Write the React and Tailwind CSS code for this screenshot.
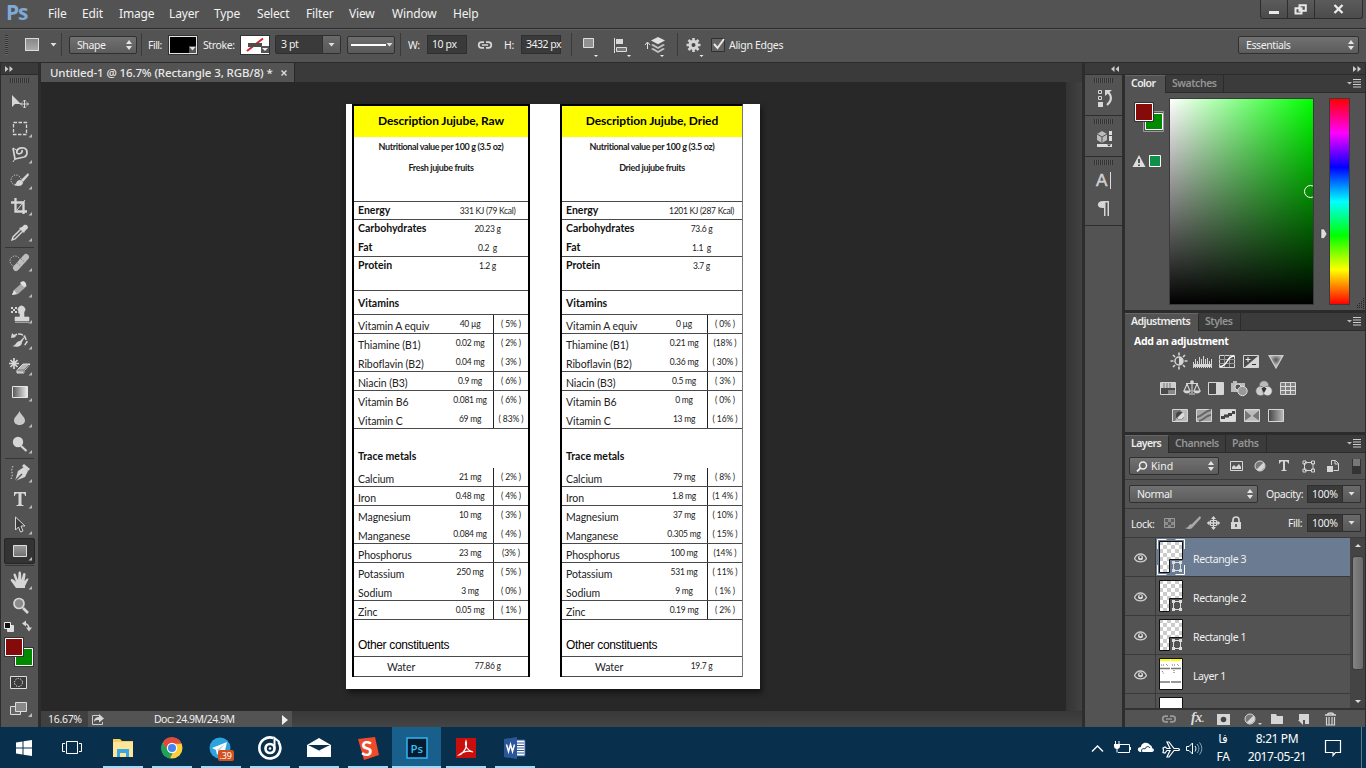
import React from "react";

const UI = "font-['Noto_Sans',sans-serif] text-[10.5px] leading-[14px] tracking-[-0.4px] whitespace-nowrap text-[#f0f0f0]";

function Svg({ w, h, className = "", children }) {
  return (
    <svg width={w} height={h} viewBox={`0 0 ${w} ${h}`} className={`block shrink-0 ${className}`} fill="none">
      {children}
    </svg>
  );
}

const L = "#d6d6d6";

/* ---------- top bars ---------- */

const menus = [
  ["File", "w-[34px]"],
  ["Edit", "w-[37px]"],
  ["Image", "w-[50px]"],
  ["Layer", "w-[45px]"],
  ["Type", "w-[43px]"],
  ["Select", "w-[49px]"],
  ["Filter", "w-[43px]"],
  ["View", "w-[43px]"],
  ["Window", "w-[61px]"],
  ["Help", "w-[40px]"],
];

function MenuBar() {
  return (
    <div className="flex h-7 items-start bg-[#535353]">
      <div className="w-[48px] pl-[6px] pt-[1px] font-['Open_Sans',sans-serif] text-[21px] font-bold leading-[23px] tracking-[-1.2px] text-[#7fa9d8]">Ps</div>
      {menus.map(([m, w]) => (
        <div key={m} className={`${w} pt-[6px] font-['Noto_Sans',sans-serif] text-[12px] leading-4 tracking-[-0.15px] whitespace-nowrap text-[#f2f2f2]`}>
          {m}
        </div>
      ))}
      <div className="ml-auto mr-[3px] flex h-[19px] rounded-b-[3px] border border-t-0 border-[#2d2d2d] bg-linear-to-b from-[#5b5b5b] to-[#4b4b4b]">
        <div className="flex w-[27px] justify-center border-r border-[#2d2d2d] pt-[11px]"><div className="h-[3px] w-[10px] bg-[#e8e8e8]" /></div>
        <div className="flex w-[27px] justify-center border-r border-[#2d2d2d] pt-1">
          <Svg w={14} h={11}><path d="M5.500 1.200h6.300v5.600H5.500zM1.500 4.200h6v5.300h-6z" stroke="#e8e8e8" strokeWidth="2" /></Svg>
        </div>
        <div className="flex w-[47px] justify-center pt-1"><Svg w={11} h={10}><path d="M1.500 1l8 8M9.500 1l-8 8" stroke="#ededed" strokeWidth="2.300" /></Svg></div>
      </div>
    </div>
  );
}

function Updown() {
  return <Svg w={6} h={10}><path d="M0 4l3-4 3 4zM0 6l3 4 3-4z" fill="#e5e5e5" /></Svg>;
}
function Down({ className = "" }) {
  return <Svg w={7} h={4} className={className}><path d="M.5 0h6L3.500 3.600z" fill="#e0e0e0" /></Svg>;
}
function Sep({ className = "" }) {
  return <div className={`h-[23px] w-px shrink-0 bg-[#3a3a3a] ${className}`} />;
}
function Select({ className = "", children }) {
  return (
    <div className={`flex h-[18px] shrink-0 items-center justify-between rounded-[2px] border border-[#303030] bg-linear-to-b from-[#717171] to-[#5c5c5c] pl-[7px] pr-[4px] ${UI} ${className}`}>
      {children}
      <Updown />
    </div>
  );
}
function LinkIcon({ c = L }) {
  return (
    <Svg w={16} h={10}>
      <path d="M7 2.200H4.500a2.800 2.800 0 0 0 0 5.600H7M9 2.200h2.500a2.800 2.800 0 0 1 0 5.600H9M5 5h6" stroke={c} strokeWidth="1.700" />
    </Svg>
  );
}

function OptionsBar() {
  return (
    <div className={`flex h-[35px] items-center border-y border-t-[#2b2b2b] border-b-[#2b2b2b] bg-[#535353] pb-[2px] shadow-[inset_0_1px_0_#626262] ${UI}`}>
      <div className="ml-[5px] h-5 w-[3px] bg-[repeating-linear-gradient(#333_0_1px,#666_1px_2px)]" />
      <div className="ml-[17px] h-[13px] w-[14px] border border-[#dcdcdc] bg-linear-to-b from-[#888] to-[#aaa]" />
      <Down className="ml-[11px]" />
      <Sep className="ml-[4px]" />
      <Select className="ml-[7px] w-[68px]">Shape</Select>
      <Sep className="ml-[4px]" />
      <div className="ml-[6px] w-[21px] tracking-[-0.5px]">Fill:</div>
      <div className="flex h-[18px] w-7 items-end justify-end border border-[#e4e4e4] bg-black outline outline-[#333]"><div className="flex h-[7px] w-[7px] items-center bg-[#555]"><Down /></div></div>
      <div className="ml-[6px] w-[38px] tracking-[-0.4px]">Stroke:</div>
      <div className="w-7 outline outline-[#333]">
        <Svg w={28} h={18}>
          <path d="M0 0h28v18H0z" fill="#fff" /><path d="M6 15L22 2.500" stroke="#d8232a" strokeWidth="2" /><path d="M7 7h14v4H7z" fill="#4a4f4b" /><path d="M20 10h8v7h-8z" fill="#555" /><path d="M21 12h6l-3 3z" fill="#eee" />
        </Svg>
      </div>
      <div className="ml-[6px] flex h-[19px] w-[66px] rounded-[2px] border border-[#2f2f2f] bg-[#3a3a3a]">
        <div className="w-[46px] pl-[5px] pt-px">3 pt</div>
        <div className="flex flex-1 items-center justify-center border-l border-[#2f2f2f] bg-linear-to-b from-[#6a6a6a] to-[#585858]"><Down /></div>
      </div>
      <div className="ml-[6px] flex h-[18px] w-[48px] items-center rounded-[2px] border border-[#303030] bg-linear-to-b from-[#6d6d6d] to-[#5a5a5a] pl-[3px]"><div className="h-[2px] w-[35px] bg-white" /><Down /></div>
      <Sep className="ml-[5px]" />
      <div className="ml-[7px] w-[19px]">W:</div>
      <div className="h-[19px] w-10 border border-[#2f2f2f] bg-[#3a3a3a] pl-[4px] pt-px">10 px</div>
      <div className="ml-[10px]"><LinkIcon /></div>
      <div className="ml-[11px] w-[17px]">H:</div>
      <div className="h-[19px] w-10 border border-[#2f2f2f] bg-[#3a3a3a] pl-[4px] pt-px tracking-[-0.5px]">3432 px</div>
      <Sep className="ml-[10px]" />
      <Svg w={98} h={26} className="ml-[7px]">
        <path d="M4.500 6.500h10v9H4.500z" fill="#919191" stroke="#dedede" />
        <path d="M15 23h4l-2 2zM48 23h4l-2 2zM81 23h4l-2 2z" fill="#eee" />
        <path d="M35.500 6v15" stroke="#ddd" /><path d="M37 7h7v5h-7z" fill="#d8d8d8" /><path d="M37.500 15.500h10v4h-10z" stroke="#ddd" fill="#777" />
        <path d="M68.500 17v-6M66 13l2.500-3 2.500 3" stroke="#e2e2e2" />
        <path d="M72 17l7 4 7-4-2-1-5 3-5-3zM72 13l7 4 7-4-2-1-5 3-5-3z" fill="#c4c4c4" /><path d="M72 8.500L79 5l7 3.500-7 3.700z" fill="#e0e0e0" />
      </Svg>
      <Sep />
      <Svg w={20} h={26} className="ml-[8px]">
        <g stroke="#d4d4d4" strokeWidth="2.600"><path d="M7.500 6v14M.5 13h14M2.500 8l10 10M12.500 8l-10 10" /></g>
        <circle cx="7.500" cy="13" r="5" fill="#d4d4d4" /><circle cx="7.500" cy="13" r="2" fill="#474747" /><path d="M13.500 23h4l-2 2z" fill="#eee" />
      </Svg>
      <Svg w={17} h={18} className="ml-[4px]">
        <path d="M1.500 2.500h13v13h-13z" fill="#636363" stroke="#303030" /><path d="M4 8l3.500 4L14 3" stroke="#e8e8e8" strokeWidth="2" />
      </Svg>
      <div className="ml-[2px] tracking-[-0.3px]">Align Edges</div>
      <Select className="ml-auto mr-[7px] w-[121px]">Essentials</Select>
    </div>
  );
}

/* ---------- tool column ---------- */

const tools = {
  move: <><path d="M11 6v12l3-3h6z" fill={L} /><path d="M23.500 11v8M19.500 15h8M22 12.500l1.500-1.500 1.500 1.500M22 17.500l1.500 1.500 1.500-1.500M21 13.500L19.500 15l1.500 1.500M26 13.500l1.500 1.500-1.500 1.500" stroke={L} /></>,
  marquee: <path d="M12.500 7.500h13v12h-13z" stroke={L} strokeWidth="1.300" strokeDasharray="3.500 1.500" />,
  lasso: <><path d="M12 7l2 11 9-2c4-1 4-8 0-9-5-1-8 2-7 5 2 2 6 0 5-3" stroke={L} strokeWidth="1.700" /><path d="M12 7l5 3M14 18l-2 3" stroke={L} /></>,
  quick: <><circle cx="15" cy="13" r="5" stroke={L} strokeDasharray="1.200 1.400" /><path d="M27 6l-7 7 2 2 6-7z" fill={L} /><path d="M19 13c-4 0-3 4-6 5 5 2 9 1 9-3z" fill={L} /></>,
  crop: <><path d="M14.500 5v13.500H26M10 9.500h12.500V21" stroke={L} strokeWidth="2.300" /><path d="M16 17l8-10" stroke={L} /></>,
  dropper: <><path d="M20 10l-8 8-1 3 3-1 8-8" stroke={L} strokeWidth="1.400" /><path d="M18 9l5 5 1-2 3-3c0-3-2-4-4-3l-2 2z" fill={L} /></>,
  heal: <><circle cx="14" cy="12" r="5" stroke={L} strokeDasharray="1.200 1.400" /><path d="M15 19l10-11" stroke="#bdbdbd" strokeWidth="6" strokeLinecap="round" /><path d="M16 14l5 4M20 10l5 4" stroke="#777" strokeDasharray="1 1.500" /></>,
  pencil: <><path d="M11 20l2-5 9-8 4 4-9 8z" fill="#a8a8a8" /><path d="M20 7c2-2 6 0 5 4l-2 1-4-4zM11 20l2-5 3 4z" fill="#e0e0e0" /></>,
  stamp: <><path d="M17 12l1-1a3.500 3.500 0 1 1 5 0v5h5v4H14v-4h5v-3M14 21.500h14" fill={L} stroke={L} strokeWidth=".6" /><path d="M10 6h2v2h-2zM14 6h2v2h-2zM12 8h2v2h-2zM10 10h2v2h-2zM14 10h2v2h-2z" fill={L} /></>,
  history: <><path d="M12 10c3-4 9-4 12 0l2 5-3 4" stroke={L} strokeDasharray="5 1" strokeWidth="1.500" /><path d="M10 11l1-5 4 4z" fill={L} /><path d="M25 8l-6 6c-4 0-4 5-8 5 6 2 10 0 10-4z" fill={L} /></>,
  eraser: <><path d="M13 5v11M8 10.500h10M9.500 7l7 7M16.500 7l-7 7" stroke={L} strokeWidth="1.700" /><path d="M16 17l6-6h7l-6 7v2h-7z" fill="#b7b7b7" stroke="#ddd" /><path d="M16 17h7v3M23 17l5-5" stroke="#777" /></>,
  gradient: <><defs><linearGradient id="tg"><stop stopColor="#555" /><stop offset="1" stopColor="#eee" /></linearGradient></defs><path d="M11.500 7.500h15v11h-15z" fill="url(#tg)" stroke="#e5e5e5" /></>,
  blur: <path d="M18.500 6c1.500 4 5.500 6 5.500 9.500 0 6-11 6-11 0 0-3.500 4-5.500 5.500-9.500z" fill="#c9c9c9" />,
  dodge: <><circle cx="17" cy="11" r="5.200" fill={L} /><path d="M20 15l5.500 5" stroke={L} strokeWidth="2.300" /></>,
  pen: <><path d="M14 21l3-10 6-4 4 4-3 6z" fill={L} /><path d="M23 4l6 5-2 2-6-5z" fill={L} /><path d="M14 21l7-7" stroke="#555" strokeWidth="1.400" /><path d="M12 6c-3 5 1 8-2 13" stroke={L} strokeDasharray="1.500 1.500" /></>,
  type: <path d="M13 6h12v4h-1c0-2-1-2.500-3.500-2.500V18c0 1 1 1 2 1v1h-7v-1c1 0 2 0 2-1V7.500C15 7.500 14 8 14 10h-1z" fill={L} />,
  arrow: <path d="M14.500 5v13l3-3 2 5 2.500-1-2-5h4z" fill="#3c3c3c" stroke={L} />,
  rect: <><defs><linearGradient id="tr" x2="0" y2="1"><stop stopColor="#9a9a9a" /><stop offset="1" stopColor="#707070" /></linearGradient></defs><path d="M12.500 7.500h13v11h-13z" fill="url(#tr)" stroke="#ddd" /></>,
  hand: <path d="M15 21l-5-7c-1-2 1-3 3-1l2 2-2.500-7c0-2 2-2 2.500 0l2 5 .5-7c0-2 2.500-2 2.500 0l.5 7 1.500-6c1-2 3-1 2.500 1l-1 6 2-2c2-1 2.500 0 1.500 1l-3 6v2h-7z" fill={L} />,
  zoom: <><circle cx="18" cy="10.500" r="5" fill="#8b8b8b" stroke={L} strokeWidth="1.700" /><path d="M22 15l5 5" stroke={L} strokeWidth="2.600" /></>,
};

function Tool({ id, corner = true, active }) {
  return (
    <div className={active ? "ml-[3px] w-[31px] rounded-[3px] bg-[#333] shadow-[inset_0_0_0_1px_#262626]" : "ml-[3px] w-[31px]"}>
      <svg width="31" height="26" viewBox="3 0 31 26" fill="none" className="block">
        {tools[id]}
        {corner && <path d="M31 19v3.500h-3.500z" fill="#bbb" />}
      </svg>
    </div>
  );
}
function ToolSep({ h = "h-[3px]" }) {
  return <div className={`mx-1 ${h} flex items-center`}><div className="h-px w-full bg-[#363636]" /></div>;
}
function Grip({ className = "" }) {
  return <div className={`h-[5px] w-[19px] bg-[repeating-linear-gradient(90deg,#333_0_1px,#5e5e5e_1px_2px)] ${className}`} />;
}
function Chev({ left }) {
  return <Svg w={8} h={6} className={left ? "rotate-180" : ""}><path d="M0 0l3.500 3L0 6zM4.500 0L8 3 4.500 6z" fill="#ccc" /></Svg>;
}

function Toolbar() {
  return (
    <div className="flex w-[41px] shrink-0 flex-col border-l border-r-[3px] border-l-[#2d2d2d] border-r-[#2d2d2d] bg-[#535353]">
      <div className="flex h-[12px] items-center border-b border-[#2b2b2b] bg-[#3a3a3a] pl-1"><Chev /></div>
      <div className="h-[14px] pl-[9px] pt-[3px]"><Grip /></div>
      <Tool id="move" corner={false} /><Tool id="marquee" /><Tool id="lasso" /><Tool id="quick" /><Tool id="crop" /><Tool id="dropper" />
      <ToolSep h="h-[4px]" />
      <Tool id="heal" /><Tool id="pencil" /><Tool id="stamp" /><Tool id="history" /><Tool id="eraser" /><Tool id="gradient" /><Tool id="blur" /><Tool id="dodge" />
      <ToolSep />
      <Tool id="pen" /><Tool id="type" /><Tool id="arrow" /><Tool id="rect" active />
      <ToolSep />
      <Tool id="hand" /><Tool id="zoom" corner={false} />
      <Svg w={37} h={108}>
        <path d="M6.500 6.500h6v6h-6z" fill="#ddd" stroke="#ddd" /><path d="M3.500 3.500h6v6h-6z" fill="#111" stroke="#eee" />
        <path d="M23 4.500c4 0 5 2 5 6" stroke={L} strokeWidth="1.500" /><path d="M21 4.500l4-3v6zM25 8.500h6l-3 4z" fill={L} />
        <path d="M14.500 29.500h17v17h-17z" fill="#008a00" stroke="#fff" /><path d="M13.500 28.500h19v19h-19z" stroke="#333" />
        <path d="M3.500 18.500h19v19h-19z" stroke="#333" /><path d="M4.500 19.500h17v17h-17z" fill="#850a0a" stroke="#fff" />
        <path d="M9.500 57.500h16v12h-16z" fill="#3c3c3c" stroke="#ddd" /><circle cx="17.500" cy="63.500" r="4" stroke="#eee" strokeDasharray="1.300 1.200" />
        <path d="M9.500 87.500h10v8h-10z" fill="#666" stroke="#ddd" /><path d="M14.500 83.500h11v9h-11z" fill="#888" stroke="#ddd" /><path d="M31 94v4h-4z" fill="#bbb" />
      </Svg>
    </div>
  );
}

/* ---------- document ---------- */

const BOLD = "text-[10.5px] font-bold tracking-[0px] text-[#111]";
const NORM = "text-[10.5px] tracking-[-0.08px] text-[#222]";

// height, line below, label, left value, left percent, right value, right percent
const rows = [
  ["h-[18px]", 1, "Energy", "331 KJ (79 Kcal)", "", "1201 KJ (287 Kcal)", ""],
  ["h-[19px]", 0, "Carbohydrates", "20.23 g", "", "73.6 g", ""],
  ["h-[18px]", 1, "Fat", "0.2  g", "", "1.1  g", ""],
  ["h-[34px]", 1, "Protein", "1.2 g", "", "3.7 g", ""],
  ["h-[24px]", 1, "Vitamins"],
  ["h-[19px]", 1, "Vitamin A equiv", "40 µg", "( 5% )", "0 µg", "( 0% )"],
  ["h-[19px]", 0, "Thiamine (B1)", "0.02 mg", "( 2% )", "0.21 mg", "(18% )"],
  ["h-[19px]", 1, "Riboflavin (B2)", "0.04 mg", "( 3% )", "0.36 mg", "( 30% )"],
  ["h-[19px]", 1, "Niacin (B3)", "0.9 mg", "( 6% )", "0.5 mg", "( 3% )"],
  ["h-[19px]", 0, "Vitamin B6", "0.081 mg", "( 6% )", "0 mg", "( 0% )"],
  ["h-[19px]", 1, "Vitamin C", "69 mg", "( 83% )", "13 mg", "( 16% )"],
  ["h-[39px]", 0, "Trace metals"],
  ["h-[19px]", 1, "Calcium", "21 mg", "( 2% )", "79 mg", "( 8% )"],
  ["h-[19px]", 1, "Iron", "0.48 mg", "( 4% )", "1.8 mg", "(1 4% )"],
  ["h-[19px]", 0, "Magnesium", "10 mg", "( 3% )", "37 mg", "( 10% )"],
  ["h-[19px]", 1, "Manganese", "0.084 mg", "( 4% )", "0.305 mg", "( 15% )"],
  ["h-[19px]", 1, "Phosphorus", "23 mg", "(3% )", "100 mg", "(14% )"],
  ["h-[19px]", 0, "Potassium", "250 mg", "( 5% )", "531 mg", "( 11% )"],
  ["h-[19px]", 1, "Sodium", "3 mg", "( 0% )", "9 mg", "( 1% )"],
  ["h-[19px]", 1, "Zinc", "0.05 mg", "( 1% )", "0.19 mg", "( 2% )"],
  ["h-[37px]", 1, "Other constituents"],
  ["h-[20px]", 1, "Water", "77.86 g", "", "19.7 g", ""],
];
const VAL = "whitespace-pre text-center text-[8.5px] leading-3 text-[#222]";

function Row({ row, right }) {
  const [h, line, label, lv, lp, rv, rp] = row;
  const v = right ? rv : lv;
  const p = right ? rp : lp;
  const border = line ? "border-b border-[#4a4a4a]" : "";
  if (v === undefined) {
    const pad =
      label === "Vitamins"
        ? `pt-[5px] ${BOLD}`
        : label === "Trace metals"
          ? `pt-[20px] ${BOLD}`
          : "pt-[18px] text-[12px] tracking-[-0.35px] font-['Liberation_Sans',sans-serif]";
    return <div className={`${h} ${border} pl-[4px] leading-[14px] ${pad}`}>{label}</div>;
  }
  if (!p) {
    const kind = label === "Water" ? `pl-[33px] pt-[3px] ${NORM}` : `pl-[4px] pt-[1px] ${BOLD}`;
    return (
      <div className={`flex ${h} ${border}`}>
        <div className={`leading-[14px] ${kind} ${right ? "w-[99px]" : "w-[93px]"}`}>{label}</div>
        <div className={`flex-1 pt-[3px] tracking-[-0.3px] ${VAL}`}>{v}</div>
      </div>
    );
  }
  return (
    <div className={`flex ${h} ${border}`}>
      <div className={`pl-[4px] pt-[4px] leading-[14px] ${NORM} ${right ? "w-[99px]" : "w-[93px]"}`}>{label}</div>
      <div className={`w-[46px] pt-[3px] tracking-[-0.25px] ${VAL}`}>{v}</div>
      <div className={`flex-1 border-l border-[#222] pt-[3px] tracking-[-0.1px] ${VAL}`}>{p}</div>
    </div>
  );
}

function Sheet({ right }) {
  return (
    <div className={`flex h-[573px] flex-col border-t-2 border-black ${right ? "ml-[30px] w-[183px] border-l-2 border-r border-r-[#777]" : "ml-[6px] w-[178px] border-x-2"}`}>
      <div className="h-[31px] bg-[#ffff00] pt-[7px] text-center text-[12px] font-bold leading-4 tracking-[-0.1px]">{right ? "Description Jujube, Dried" : "Description Jujube, Raw"}</div>
      <div className="h-[65px] border-b border-[#4a4a4a] text-center text-[9px] font-bold leading-[21px] tracking-[-0.37px] text-[#1c1c1c]">
        <div className="-mt-[1px]">Nutritional value per 100 g (3.5 oz)</div>
        <div>{right ? "Dried jujube fruits" : "Fresh jujube fruits"}</div>
      </div>
      {rows.map((r) => <Row key={r[2]} row={r} right={right} />)}
    </div>
  );
}

function Document() {
  return (
    <div className="flex w-[1041px] shrink-0 flex-col">
      <div className="flex h-[19px] bg-[#3a3a3a]">
        <div className="flex w-[254px] items-center border-r border-[#282828] bg-[#535353] pl-[9px] font-['Noto_Sans',sans-serif] text-[11.5px] font-medium tracking-[-0.12px] whitespace-nowrap text-[#e8e8e8]">
          Untitled-1 @ 16.7% (Rectangle 3, RGB/8) *
          <Svg w={6} h={6} className="ml-auto mr-[7px]"><path d="M.5.5l5 5M5.500.5l-5 5" stroke="#ddd" strokeWidth="1.400" /></Svg>
        </div>
      </div>
      <div className="flex h-[629px] bg-[#282828]">
        <div className="h-full flex-1 pl-[305px] pt-[22px]">
          <div className="flex h-[585px] w-[414px] bg-white font-['Lato',sans-serif] text-black shadow-[2px_4px_5px_#151515]">
            <Sheet />
            <Sheet right />
          </div>
        </div>
        <div className="w-[16px] bg-linear-to-r from-[#343434] to-[#424242]" />
      </div>
      <div className={`flex h-4 bg-linear-to-b from-[#383838] to-[#444] ${UI}`}>
        <div className="w-[47px] bg-[#404040] pl-[7px] pt-px tracking-[-0.3px]">16.67%</div>
        <div className="flex w-[204px] bg-[#535353]">
          <Svg w={16} h={16} className="ml-[2px]"><path d="M9 4.500H2.500v9h10V11" stroke="#ccc" /><path d="M4 11c0-4 3-5 5-5V3l5 4.500-5 4V9c-2 0-4 0-5 2z" fill={L} /></Svg>
          <div className="ml-[48px] pt-px tracking-[-0.55px]">Doc: 24.9M/24.9M</div>
          <Svg w={7} h={10} className="ml-auto mr-[3px] mt-1"><path d="M0 0l6 5-6 5z" fill="#eee" /></Svg>
        </div>
      </div>
    </div>
  );
}

/* ---------- right dock ---------- */

function IconStrip() {
  return (
    <div className="flex w-[37px] flex-col">
      <div className="h-[41px] border-b border-[#2d2d2d] pl-[9px] pt-[3px]">
        <Grip />
        <Svg w={19} h={22} className="mt-[5px]"><path d="M4.500 2.500h3v3h-3zM4.500 8.500h3v3h-3z" stroke={L} /><path d="M4 14h5v5H4z" fill={L} /><path d="M14 4c4 4 4 9-1 13" stroke={L} strokeWidth="2.200" /><path d="M11 8V2h7z" fill={L} /></Svg>
      </div>
      <div className="h-[41px] border-b border-[#2d2d2d] pl-[9px] pt-[3px]">
        <Grip />
        <Svg w={19} h={22} className="mt-[5px]"><path d="M3 5l5-3 5 3v6l-5 3-5-3z" fill="#bbb" /><path d="M3 5l5 3 5-3M8 8v6" stroke="#555" /><path d="M15 2h3v4h-3zM15 7h3v5h-3zM3 15h15v3H3z" fill="#ddd" /><path d="M13 15.500h4l-2 2z" fill="#333" /></Svg>
      </div>
      <div className="h-[69px] border-b border-[#2d2d2d] pl-[9px] pt-[3px]">
        <Grip />
        <Svg w={20} h={54} className="mt-[3px]">
          <text x="2" y="18" fill="#d0d0d0" fontFamily="Liberation Sans" stroke="#d0d0d0" strokeWidth=".5" fontSize="17">A</text><path d="M16.500 4v17" stroke="#ddd" />
          <path d="M9 33h6v15h-1.500V34.500h-2V48H10v-8C2 41 2 33 9 33z" fill={L} />
        </Svg>
      </div>
    </div>
  );
}

function Tabs({ items }) {
  return (
    <div className="flex h-[18px] shrink-0 bg-[#3b3b3b] font-['Noto_Sans',sans-serif] text-[10.5px] font-semibold whitespace-nowrap">
      {items.map(([t, w], i) => (
        <div key={t} className={`${w} border-r border-[#2b2b2b] pl-[6px] ${i ? "border-b leading-[17px] tracking-[-0.45px] text-[#949494]" : "border-t border-t-[#666] bg-[#535353] leading-[15px] tracking-[-0.55px] text-[#ededed]"}`}>{t}</div>
      ))}
      <div className="flex flex-1 items-center justify-end border-b border-[#2b2b2b] pr-[4px]">
        <Svg w={14} h={9}><path d="M0 3h5L2.500 5.500z" fill="#bbb" /><path d="M6 .5h8M6 3h8M6 5.500h8M6 8h8" stroke="#ccc" /></Svg>
      </div>
    </div>
  );
}

function ColorPanel() {
  return (
    <div className="flex h-[238px] shrink-0 flex-col border-b-[3px] border-[#2b2b2b]">
      <Tabs items={[["Color", "w-[41px]"], ["Swatches", "w-[58px]"]]} />
      <div className="flex pt-[5px]">
        <Svg w={44} h={80}>
          <path d="M18.500 13.500h20v20h-20z" stroke="#999" /><path d="M20.500 15.500h17v16h-17z" fill="#008a00" stroke="#fff" />
          <path d="M9.500 4.500h19v19h-19z" stroke="#333" /><path d="M10.500 5.500h17v17h-17z" fill="#850a0a" stroke="#fff" />
          <path d="M14 57l6.500 12h-13z" fill="#ddd" /><path d="M14 61v4M14 66.500v1.500" stroke="#333" strokeWidth="1.600" />
          <path d="M24.500 57.500h11v11h-11z" fill="#0f9048" stroke="#fff" />
        </Svg>
        <div className="relative h-[207px] w-[145px] overflow-hidden border border-[#3a3a3a] bg-[linear-gradient(to_top,#000,transparent),linear-gradient(to_right,#fff,#00ff00)]">
          <div className="absolute left-[134px] top-[86px] h-[13px] w-[13px] rounded-full border border-white" />
        </div>
        <Svg w={15} h={207}><path d="M7 131h3l3 5-3 4.500H7z" fill="#ddd" stroke="#333" strokeWidth=".5" /></Svg>
        <div className="h-[207px] w-[21px] border border-[#3a3a3a] bg-[linear-gradient(#f00,#f0f,#00f,#0ff,#0f0,#ff0,#f00)]" />
        <Svg w={15} h={211}><path d="M13.500 200v11M11.500 203v8M9.500 205v6M7.500 207v4" stroke="#222" strokeDasharray="1 1" /></Svg>
      </div>
    </div>
  );
}

function Box({ children }) {
  return <Svg w={16} h={14}><path d="M.5 1.500h15v12H.5z" fill="#4a4a4a" stroke={L} />{children}</Svg>;
}

function Adjustments() {
  return (
    <div className="flex h-[122px] shrink-0 flex-col border-b-[3px] border-[#2b2b2b]">
      <Tabs items={[["Adjustments", "w-[74px]"], ["Styles", "w-[42px]"]]} />
      <div className="h-[21px] pl-[9px] pt-[3px] font-['Noto_Sans',sans-serif] text-[10.5px] font-bold leading-[14px] tracking-[-0.3px] text-white">Add an adjustment</div>
      <div className="flex h-[18px] items-center pl-[45px]">
        <Svg w={18} h={18}><path d="M9 .5v3M9 14.500v3M.5 9h3M14.500 9h3M3 3l2 2M13 13l2 2M15 3l-2 2M5 13l-2 2" stroke={L} strokeWidth="1.600" /><circle cx="9" cy="9" r="4" fill="#555" stroke={L} strokeWidth="1.500" /><path d="M9 5v8a4 4 0 0 0 0-8z" fill={L} /></Svg>
        <Svg w={19} h={14} className="ml-[5px]"><path d="M.5 14V8M2.500 14V5M4.500 14V7M6.500 14V3M8.500 14V5M10.500 14V2M12.500 14V5M14.500 14V4M16.500 14V7M18.500 14V5" stroke={L} /><path d="M0 10h19v3H0z" fill={L} /></Svg>
        <div className="ml-[7px]"><Box><path d="M5.500 1v12M10.500 1v12M0 5.500h16M0 9.500h16" stroke="#999" /><path d="M1 12.500c8 0 6-10 14-10.500" stroke="#fff" strokeWidth="1.400" /></Box></div>
        <div className="ml-[8px]"><Box><path d="M15 2v11H2z" fill={L} /><path d="M2.500 5.500h5M5 3v5" stroke="#eee" /><path d="M9 10.500h4" stroke="#333" /></Box></div>
        <Svg w={16} h={15} className="ml-[9px]"><defs><radialGradient id="vg" cx=".5" cy=".35" r=".5"><stop stopColor="#555" /><stop offset="1" stopColor="#c8c8c8" /></radialGradient></defs><path d="M1 1.500h14L8 14z" fill="url(#vg)" stroke="#ccc" strokeWidth="1.200" /></Svg>
      </div>
      <div className="flex h-9 items-center pl-[35px]">
        <Box><path d="M1 2h14v5H1z" fill="#ccc" /><path d="M4 2v5M7 2v5M10 2v5" stroke="#777" /><path d="M8 9h7v4H8z" fill="#888" /></Box>
        <Svg w={18} h={16} className="ml-[7px]"><path d="M9 1v12M6 14h6M3 3.500h12M4 4l-3 7M4 4l3 7M14 4l-3 7M14 4l3 7" stroke={L} strokeWidth="1.100" /><path d="M0 10.500h8c-1 4-7 4-8 0zM10 10.500h8c-1 4-7 4-8 0z" fill={L} /><circle cx="9" cy="2" r="1.800" fill={L} /></Svg>
        <div className="ml-[7px]"><Box><path d="M8 2h7v11H8z" fill={L} /></Box></div>
        <Svg w={19} h={17} className="ml-[6px]"><path d="M1 3h2V1h4v2h8v9H1z" fill="#bbb" /><circle cx="8" cy="7" r="3" fill="#555" stroke="#ddd" /><circle cx="12.500" cy="11" r="4.700" fill="#999" stroke="#ddd" /></Svg>
        <Svg w={18} h={17} className="ml-[6px]"><g stroke="#666" strokeWidth=".7"><circle cx="9" cy="5.500" r="4.700" fill="#bbb" /><circle cx="5.500" cy="11" r="4.700" fill="#ccc" /><circle cx="12.500" cy="11" r="4.700" fill="#ddd" /></g><path d="M6.500 8.500L9 7l2.500 1.500L9 13z" fill="#333" /></Svg>
        <div className="ml-[7px]"><Box><path d="M1 2h14v11H1z" fill="#808080" /><path d="M5.500 1v12M10.500 1v12M0 5.500h16M0 9.500h16" stroke="#ddd" /></Box></div>
      </div>
      <div className="flex h-[18px] items-center gap-2 pl-[47px]">
        <Box><path d="M1 2h14v11H1z" fill="#bbb" /><path d="M1 2h8L3 13H1z" fill="#777" /><circle cx="8" cy="7.500" r="4" fill="#444" /><path d="M11 4a4 4 0 0 1-6 6z" fill="#ddd" /></Box>
        <Box><path d="M1 2h14v11H1z" fill="#a5a5a5" /><path d="M1 9c5 0 7-6 14-7M3 13c5-1 7-6 12-6" stroke="#666" strokeWidth="2" /></Box>
        <Box><path d="M1 2h14v11H1z" fill="#ddd" /><path d="M1 8h3V6.500h4V5h4V3h3v3h-3v2H9v1.500H5V11H1z" fill="#444" /></Box>
        <Box><path d="M1 2h14v11H1z" fill="#777" /><path d="M1 2l7 6 7-6zM1 13l7-5 7 5z" fill="#bbb" stroke="#ddd" strokeWidth=".5" /></Box>
        <Svg w={16} h={14}><defs><linearGradient id="ag"><stop stopColor="#444" /><stop offset="1" stopColor="#bbb" /></linearGradient></defs><path d="M.5 1.500h15v12H.5z" fill="url(#ag)" stroke={L} /></Svg>
      </div>
    </div>
  );
}

function Percent() {
  return (
    <div className={`ml-[5px] flex h-[18px] w-[54px] border border-[#2f2f2f] bg-[#3a3a3a] ${UI}`}>
      <div className="w-[34px] pl-[4px] pt-px tracking-[-0.25px]">100%</div>
      <div className="flex flex-1 items-center justify-center border-l border-[#2f2f2f] bg-linear-to-b from-[#6a6a6a] to-[#585858]"><Down /></div>
    </div>
  );
}

function Eye() {
  return <Svg w={13} h={10}><path d="M.5 5.500C3-.5 10-.5 12.500 5.500 10 10 3 10 .5 5.500z" stroke="#ccc" strokeWidth="1.300" /><circle cx="6.500" cy="4.700" r="2.500" fill="#ddd" /><circle cx="6.500" cy="4.200" r="1.100" fill="#444" /></Svg>;
}

function Thumb({ kind }) {
  if (kind === "blank") return <Svg w={24} h={32}><path d="M.5.5h23v31H.5z" fill="#fff" stroke="#111" /></Svg>;
  if (kind === "table")
    return (
      <Svg w={24} h={32}>
        <path d="M.5.5h23v31H.5z" fill="#fff" stroke="#111" /><path d="M1 1h10v2H1zM12 1h10v2H12z" fill="#ff0" />
        <path d="M1 10.500h10M12 10.500h10M1 24h10M12 24h10" stroke="#777" strokeWidth="1.300" />
        <path d="M2 7h3M7 6l2 2M13 7h3M18 6l2 2M3 13l2 3M15 12v3" stroke="#666" strokeDasharray="1 1" />
      </Svg>
    );
  return (
    <Svg w={24} h={32}>
      <defs><pattern id="ck" width="8" height="8" patternUnits="userSpaceOnUse"><path d="M0 0h8v8H0z" fill="#fff" /><path d="M0 0h4v4H0zM4 4h4v4H4z" fill="#ccc" /></pattern></defs>
      <path d="M.5.5h23v18h-13v13H.5z" fill="url(#ck)" stroke="#111" />
      <path d="M14.500 21.500h7v8h-7z" stroke="#ddd" /><path d="M13 20h3v3h-3zM20 20h3v3h-3zM13 28h3v3h-3zM20 28h3v3h-3z" fill="#ddd" />
    </Svg>
  );
}

const layers = [["Rectangle 3", "shape"], ["Rectangle 2", "shape"], ["Rectangle 1", "shape"], ["Layer 1", "table"]];

function Layers() {
  return (
    <div className="flex flex-1 flex-col overflow-hidden">
      <Tabs items={[["Layers", "w-[44px]"], ["Channels", "w-[57px]"], ["Paths", "w-[41px]"]]} />
      <div className="flex h-[27px] items-center border-b border-[#3a3a3a] pl-[4px]">
        <div className={`flex h-[18px] w-[90px] items-center rounded-[2px] border border-[#303030] bg-linear-to-b from-[#717171] to-[#5c5c5c] pl-[6px] pr-[4px] ${UI}`}>
          <Svg w={12} h={11}><circle cx="7" cy="4.500" r="3.500" stroke="#eee" strokeWidth="1.500" /><path d="M4.500 7L1 10.500" stroke="#eee" strokeWidth="1.800" /></Svg>
          <span className="ml-[3px] mr-auto tracking-[0px]">Kind</span>
          <Updown />
        </div>
        <Svg w={135} h={20} className="ml-[7px]">
          <path d="M4.500 5.500h12v9h-12z" stroke={L} /><path d="M6 13v-2l2-2 2 2 3-3 2 3v2z" fill={L} />
          <circle cx="34" cy="10" r="5" fill="#777" stroke={L} /><path d="M30.500 13.500a5 5 0 0 0 7-7z" fill={L} />
          <path d="M53 4h10v3.500h-1c0-1.500-1-2-3-2V13c0 1 .5 1 1.500 1v1h-5v-1c1 0 1.500 0 1.500-1V5.500c-2 0-3 .5-3 2h-1z" fill={L} />
          <path d="M79 6.500h7M79 14.500h7M78.500 7v7M87 7v7" stroke={L} /><path d="M77 5h3v3h-3zM85.500 5h3v3h-3zM77 13h3v3h-3zM85.500 13h3v3h-3z" stroke={L} />
          <path d="M105.500 9V4.500h4l3 3v7h-5" stroke={L} /><path d="M109 4v4h4" stroke={L} /><path d="M101 10h6v6h-6z" fill={L} />
          <path d="M126 3h9v15h-9z" fill="#333" /><path d="M127 3h7v7h-7z" fill="#777" />
        </Svg>
      </div>
      <div className={`flex h-[29px] items-center border-b border-[#3a3a3a] pl-[4px] ${UI}`}>
        <Select className="w-[129px]">Normal</Select>
        <div className="ml-[8px] w-[36px]">Opacity:</div>
        <Percent />
      </div>
      <div className={`flex h-[28px] items-center pl-[6px] ${UI}`}>
        <div className="w-[31px] pt-[2px]">Lock:</div>
        <Svg w={82} h={18}>
          <path d="M2.500 4.500h10v9h-10z" fill="#8a8a8a" stroke="#999" /><path d="M3 5h3v3H3zM9 5h3v3H9zM6 8h3v3H6zM3 11h3v2H3zM9 11h3v2H9z" fill="#5c5c5c" />
          <path d="M38 2l-9 9 2 2 8-9z" fill="#aaa" /><path d="M29 10c-3 1-2 4-6 4 4 2 8 1 8-2z" fill="#aaa" />
          <path d="M51.500 3v12M45.500 9h12" stroke={L} strokeWidth="1.300" /><path d="M49 5l2.500-3L54 5zM49 13l2.500 3 2.500-3zM47.500 6.500L45 9l2.500 2.500zM55.500 6.500L58 9l-2.500 2.500z" fill={L} /><path d="M48.500 6.500h6v5h-6z" stroke={L} />
          <path d="M71 8V6c0-4 6-4 6 0v2" stroke={L} strokeWidth="1.700" /><path d="M69 8h10v7H69z" fill={L} /><path d="M74 10v3" stroke="#444" strokeWidth="1.500" />
        </Svg>
        <div className="ml-auto tracking-[-0.5px]">Fill:</div>
        <div className="mr-[4px]"><Percent /></div>
      </div>
      <div className="flex h-[171px] border-t border-[#3a3a3a]">
        <div className="flex w-[225px] flex-col overflow-hidden">
          {layers.map(([name, kind], i) => (
            <div key={name} className="flex h-[39px] shrink-0 border-b border-[#3a3a3a]">
              <div className="flex w-[31px] items-center justify-center border-r border-[#3a3a3a] pt-px"><Eye /></div>
              <div className={`flex flex-1 items-center ${i ? "" : "bg-[#6b7b91]"}`}>
                {i === 0 ? (
                  <svg width="28" height="36" viewBox="0 0 28 36" fill="none" className="ml-px block shrink-0">
                    <path d="M.5 10V.5h9M18.500.5h9V10M27.500 26v9.500h-9M9.500 35.500h-9V26" stroke="#fff" />
                    <g transform="translate(2 2)"><Thumb kind={kind} /></g>
                  </svg>
                ) : (
                  <div className="ml-[3px] mr-[2px]"><Thumb kind={kind} /></div>
                )}
                <div className={`ml-2 pt-[4px] ${UI}`}>{name}</div>
              </div>
            </div>
          ))}
          <div className="flex h-[14px]">
            <div className="w-[31px] border-r border-[#3a3a3a]" />
            <div className="ml-[3px] pt-[3px]"><Thumb kind="blank" /></div>
          </div>
        </div>
        <div className="flex w-[15px] flex-col items-center justify-between bg-[#444] pb-[5px] pt-[6px]">
          <Svg w={6} h={3}><path d="M0 3l3-3 3 3z" fill="#ddd" /></Svg>
          <div className="mb-auto mt-[9px] h-[114px] w-[12px] rounded-[3px] border border-[#3a3a3a] bg-linear-to-r from-[#838383] to-[#6a6a6a]" />
          <Svg w={6} h={3}><path d="M0 0l3 3 3-3z" fill="#ddd" /></Svg>
        </div>
      </div>
      <div className="flex flex-1 items-center border-t-2 border-[#333] pl-[36px]">
        <LinkIcon c="#999" />
        <div className="ml-[14px] w-[24px] font-['Liberation_Serif',serif] text-[14px] font-bold italic leading-4 tracking-[-0.3px] text-[#ddd]">fx<span className="text-[9px]">.</span></div>
        <Svg w={140} h={16}>
          <path d="M2 3h13v11H2z" fill={L} /><circle cx="8.500" cy="8.500" r="2.800" fill="#444" />
          <circle cx="35" cy="8" r="5" fill="#777" stroke={L} /><path d="M31.500 11.500a5 5 0 0 0 7-7z" fill={L} /><path d="M43 12h4l-2 2z" fill={L} />
          <path d="M56 3h5l1 2h6v8H56z" fill={L} />
          <path d="M84 3h10v10h-4V9h-6z" fill={L} /><path d="M83 9h5v5z" fill={L} />
          <path d="M110 4h11M112.500 3.500c0-2 6-2 6 0" stroke={L} strokeWidth="1.300" /><path d="M111.500 6v8h8V6M114 6v8M117 6v8" stroke={L} strokeWidth="1.200" />
        </Svg>
      </div>
    </div>
  );
}

function Dock() {
  return (
    <div className="flex w-[284px] shrink-0 flex-col border-l-[3px] border-r border-[#2d2d2d] bg-[#535353]">
      <div className="flex h-[12px] items-center justify-between border-b border-[#2b2b2b] bg-[#3a3a3a] pl-[26px] pr-1"><Chev left /><Chev /></div>
      <div className="flex min-h-0 flex-1">
        <IconStrip />
        <div className="flex w-[243px] flex-col border-l-[3px] border-[#2d2d2d]">
          <ColorPanel />
          <Adjustments />
          <Layers />
        </div>
      </div>
    </div>
  );
}

/* ---------- taskbar ---------- */

const apps = [
  <Svg w={24} h={24}><path d="M2 3h7l2 2h11v16H2z" fill="#f3cf62" /><path d="M2 6h20v15H2z" fill="#ffe597" /><path d="M6 21v-8h12v8h-3v-4H9v4z" fill="#38a7e5" /></Svg>,
  <Svg w={24} h={24}><circle cx="12" cy="12" r="10.500" fill="#fcd03a" /><path d="M2.700 6.500a10.500 10.500 0 0 1 18.800 1.300H12L7.500 15z" fill="#e04a3c" /><path d="M2.700 6.500l5.200 8 5 2.200-3 5.800A10.500 10.500 0 0 1 2.700 6.500z" fill="#23a15a" /><circle cx="12" cy="12" r="5.200" fill="#fff" /><circle cx="12" cy="12" r="4" fill="#4385ec" /></Svg>,
  <Svg w={28} h={26}><circle cx="13" cy="13" r="10.500" fill="#2ca3dc" /><path d="M5 13l15-6-3 13-5-3-2 3-1-5z" fill="#fff" /><path d="M9.500 15L18 9l-6 7z" fill="#b8d7e8" /><rect x="11" y="15" width="16" height="11" rx="2" fill="#d4501e" /><text x="12.500" y="24" fontSize="9" fontFamily="Noto Sans" fill="#fff" textLength="12.500">.39</text></Svg>,
  <Svg w={26} h={26}><path d="M16.500 3.100A10.500 10.500 0 1 0 21.500 7" stroke="#fff" strokeWidth="2.600" /><circle cx="13" cy="13.500" r="4.500" stroke="#fff" strokeWidth="2.700" /><circle cx="13" cy="13.500" r="1.300" fill="#fff" /><path d="M17.500 13V3l5 4" stroke="#fff" strokeWidth="2" /></Svg>,
  <Svg w={24} h={24}><path d="M0 9l12-7 12 7v12H0z" fill="#fff" /><path d="M1 9h22L12 14.500l5 3.500-6-4z" fill="#08304c" /></Svg>,
  <Svg w={24} h={24}><path d="M2 3l17-2 4 18-15 5z" fill="#f04a2c" /><text x="5" y="20" fontSize="21" fontWeight="bold" fontFamily="Lato" fill="#fff">S</text></Svg>,
  <Svg w={22} h={22}><path d="M1 1h20v20H1z" fill="#061b30" stroke="#31b5f4" strokeWidth="1.500" /><text x="4.500" y="15.500" fontSize="11.500" fontWeight="600" fontFamily="Open Sans" fill="#31c5f4" textLength="12.500">Ps</text></Svg>,
  <Svg w={22} h={22}><path d="M1 1h20v20H1z" fill="#c90e0e" /><path d="M11 4c-2 5 2 10 7 11-5-2-11 0-14 3 4-1 9-8 7-14z" stroke="#fff" strokeWidth="1.200" /></Svg>,
  <Svg w={24} h={24}><path d="M12 4h10v16H12z" fill="#fff" stroke="#2b579a" /><path d="M14 7h7M14 9.500h7M14 12h7M14 14.500h7M14 17h7" stroke="#2b579a" strokeWidth="1.200" /><path d="M1 3l13-2v22L1 21z" fill="#2b579a" /><path d="M3.500 8.500l2 7 2-7 2 7 2-7" stroke="#fff" strokeWidth="1.500" /></Svg>,
];

function Taskbar() {
  return (
    <div className="flex h-[41px] shrink-0 bg-[#08304c] font-['Noto_Sans',sans-serif] text-white">
      <div className="flex w-12 items-center justify-center">
        <Svg w={16} h={16}><path d="M0 2.500L6.500 1.500V7.500H0zM7.500 1.300L16 0v7.500H7.500zM0 8.500h6.500v6L0 13.500zM7.500 8.500H16V16L7.500 14.700z" fill="#fff" /></Svg>
      </div>
      <div className="flex w-[50px] items-center justify-center pr-[2px]">
        <Svg w={20} h={15}><path d="M4.500 1.500h11v12h-11zM3 3.500H.5v8H3M17 3.500h2.500v8H17" stroke="#fff" /></Svg>
      </div>
      {apps.map((a, i) => (
        <div key={i} className={`relative flex w-[49px] items-center justify-center ${i === 6 ? "bg-[#195f8c]" : ""}`}>
          {a}
          <div className={`absolute bottom-0 h-[2px] bg-[#a4d8f8] ${i === 6 ? "w-[49px]" : "w-10"}`} />
        </div>
      ))}
      <Svg w={114} h={41} className="ml-auto">
        <path d="M2 24.500l5.500-5.500 5.500 5.500" stroke="#fff" strokeWidth="1.400" />
        <path d="M29 17.500h10.500v8H28M40.500 20v3M25.500 14v4M29 14v3" stroke="#fff" /><path d="M24 17h6v2c0 2-1 3-3 3s-3-1-3-3z" fill="#fff" /><path d="M27 22v3.500" stroke="#fff" />
        <path d="M50 25c-3-1-3-5 1-5 0-4 6-6 9-2 2 1 2 2 2 3 3 1 2 4 0 4z" fill="#fff" /><path d="M52 25c-2-3 2-4 3-3 1-3 4-3 5-1" stroke="#08304c" />
        <path d="M73 21l2-1 2 1.500h3L77 15h2l5 6.500h4c2 0 2 2 0 2h-4l-5 6.500h-2l3-6.500h-3L75 26l-2-.5.5-2.500z" stroke="#fff" strokeWidth="1.200" />
        <path d="M96.500 19.500h2.500l3.500-3.500v11l-3.500-3.500h-2.500zM105 19c1.200 1.500 1.200 4 0 5.500" stroke="#fff" /><path d="M107 17c2.500 3 2.500 6 0 9M109.500 15.500c3 4 3 8 0 12" stroke="#8fa5b3" />
      </Svg>
      <div className="ml-[2px] w-[34px] pt-[3px] text-center text-[12px] leading-[18px]"><div className="font-['DejaVu_Sans',sans-serif] text-[12px]">فا</div><div className="tracking-[-0.4px]">FA</div></div>
      <div className="ml-px w-[72px] pt-[3px] text-center text-[12px] leading-[18px] tracking-[-0.4px] whitespace-nowrap"><div>8:21 PM</div><div>2017-05-21</div></div>
      <Svg w={18} h={18} className="ml-[11px] mt-[12px]"><path d="M1.500 1.500h15v12h-5l-2.500 3v-3H1.500z" stroke="#fff" strokeWidth="1.200" /></Svg>
      <div className="ml-[19px] mr-[4px] w-px bg-[#5e7888]" />
    </div>
  );
}

export default function App() {
  return (
    <div className="flex h-[768px] w-[1366px] flex-col overflow-hidden bg-[#535353]">
      <MenuBar />
      <OptionsBar />
      <div className="flex h-[664px] shrink-0">
        <Toolbar />
        <Document />
        <Dock />
      </div>
      <Taskbar />
    </div>
  );
}
